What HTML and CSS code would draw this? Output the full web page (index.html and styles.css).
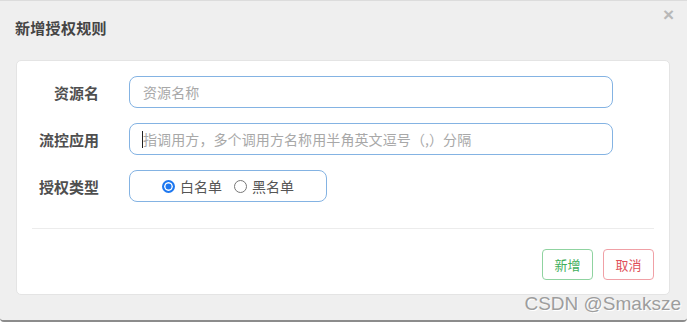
FILE: index.html
```html
<!DOCTYPE html>
<html lang="zh">
<head>
<meta charset="utf-8">
<title>新增授权规则</title>
<link rel="stylesheet" href="styles.css">
</head>
<body>
<div class="dialog">
  <div class="header">
    <h3 class="title">新增授权规则</h3>
    <span class="close">×</span>
  </div>
  <div class="card">
    <div class="form">
      <div class="row">
        <label class="label">资源名</label>
        <input class="input" type="text" placeholder="资源名称">
      </div>
      <div class="row">
        <label class="label">流控应用</label>
        <span class="field">
          <input class="input" type="text" placeholder="指调用方，多个调用方名称用半角英文逗号（,）分隔">
          <span class="caret"></span>
        </span>
      </div>
      <div class="row">
        <label class="label">授权类型</label>
        <div class="radio-box">
          <span class="radio-item"><span class="radio checked"></span>白名单</span>
          <span class="radio-item"><span class="radio"></span>黑名单</span>
        </div>
      </div>
    </div>
    <div class="divider"></div>
    <div class="actions">
      <button class="btn btn-ok">新增</button>
      <button class="btn btn-cancel">取消</button>
    </div>
  </div>
  <span class="watermark">CSDN @Smaksze</span>
</div>
</body>
</html>
```
FILE: styles.css
```css
html, body {
  margin: 0;
  padding: 0;
}
body {
  width: 687px;
  height: 322px;
  overflow: hidden;
  background: #ffffff;
  font-family: "Noto Sans CJK SC", "Noto Sans", sans-serif;
}
.dialog {
  position: relative;
  box-sizing: border-box;
  width: 687px;
  height: 322px;
  background: #efefef;
  border-top: 1px solid #dcdcdc;
  border-bottom: 2px solid #8c8c8c;
  border-radius: 0 0 4px 4px;
}
.header {
  position: relative;
  height: 59px;
  padding-left: 15px;
  display: flex;
  align-items: center;
}
.title {
  margin: 0;
  font-size: 15px;
  font-weight: bold;
  color: #444;
  letter-spacing: 0.3px;
  margin-top: -7px;
}
.close {
  position: absolute;
  right: 13px;
  top: 3px;
  font-family: "Liberation Sans", sans-serif;
  font-size: 19px;
  color: #b8b8b8;
  font-weight: bold;
}
.card {
  box-sizing: border-box;
  margin-left: 16px;
  width: 654px;
  height: 235px;
  background: #fff;
  border: 1px solid #e4e4e4;
  border-radius: 5px;
  padding: 15px 0 0 0;
}
.form {
  display: flex;
  flex-direction: column;
  gap: 15px;
}
.row {
  display: flex;
  align-items: center;
  height: 32px;
}
.label {
  width: 82px;
  text-align: right;
  font-size: 15px;
  font-weight: bold;
  color: #4f4f4f;
  margin-right: 30px;
}
.field {
  position: relative;
  display: block;
}
.input {
  box-sizing: border-box;
  width: 484px;
  height: 32px;
  border: 1px solid #84b3e3;
  border-radius: 8px;
  padding: 0 13px;
  font-family: "Noto Sans CJK SC", sans-serif;
  font-size: 14px;
  letter-spacing: 0.1px;
  color: #555;
  outline: none;
  background: #fff;
}
.input::placeholder {
  color: #a8a8a8;
}
.caret {
  position: absolute;
  left: 13px;
  top: 8px;
  width: 1px;
  height: 17px;
  background: #222;
}
.radio-box {
  box-sizing: border-box;
  width: 198px;
  height: 32px;
  border: 1px solid #84b3e3;
  border-radius: 8px;
  display: flex;
  align-items: center;
  justify-content: center;
  gap: 12px;
  font-size: 14px;
  color: #555;
}
.radio-item {
  display: flex;
  align-items: center;
  gap: 5px;
}
.radio {
  box-sizing: border-box;
  width: 13px;
  height: 13px;
  border-radius: 50%;
  border: 1px solid #777;
  background: #fff;
}
.radio.checked {
  border: 2px solid #1e78f0;
  background: #1e78f0;
  box-shadow: inset 0 0 0 1.5px #fff;
}
.divider {
  margin: 26px 15px 0 15px;
  height: 1px;
  background: #ececec;
}
.actions {
  display: flex;
  justify-content: flex-end;
  gap: 10px;
  padding-right: 15px;
  margin-top: 20px;
}
.btn {
  box-sizing: border-box;
  width: 51px;
  height: 31px;
  background: #fff;
  border-radius: 4px;
  font-family: "Noto Sans CJK SC", sans-serif;
  font-size: 13px;
  padding: 0;
  cursor: pointer;
}
.btn-ok {
  border: 1px solid #8fd3a0;
  color: #3fae5a;
}
.btn-cancel {
  border: 1px solid #f0a0a6;
  color: #e0505a;
}
.watermark {
  position: absolute;
  right: 6px;
  bottom: 5px;
  font-family: "Liberation Sans", sans-serif;
  font-size: 19px;
  color: #9d9d9d;
  text-shadow: 1px 1px 0 #fff;
}
```
